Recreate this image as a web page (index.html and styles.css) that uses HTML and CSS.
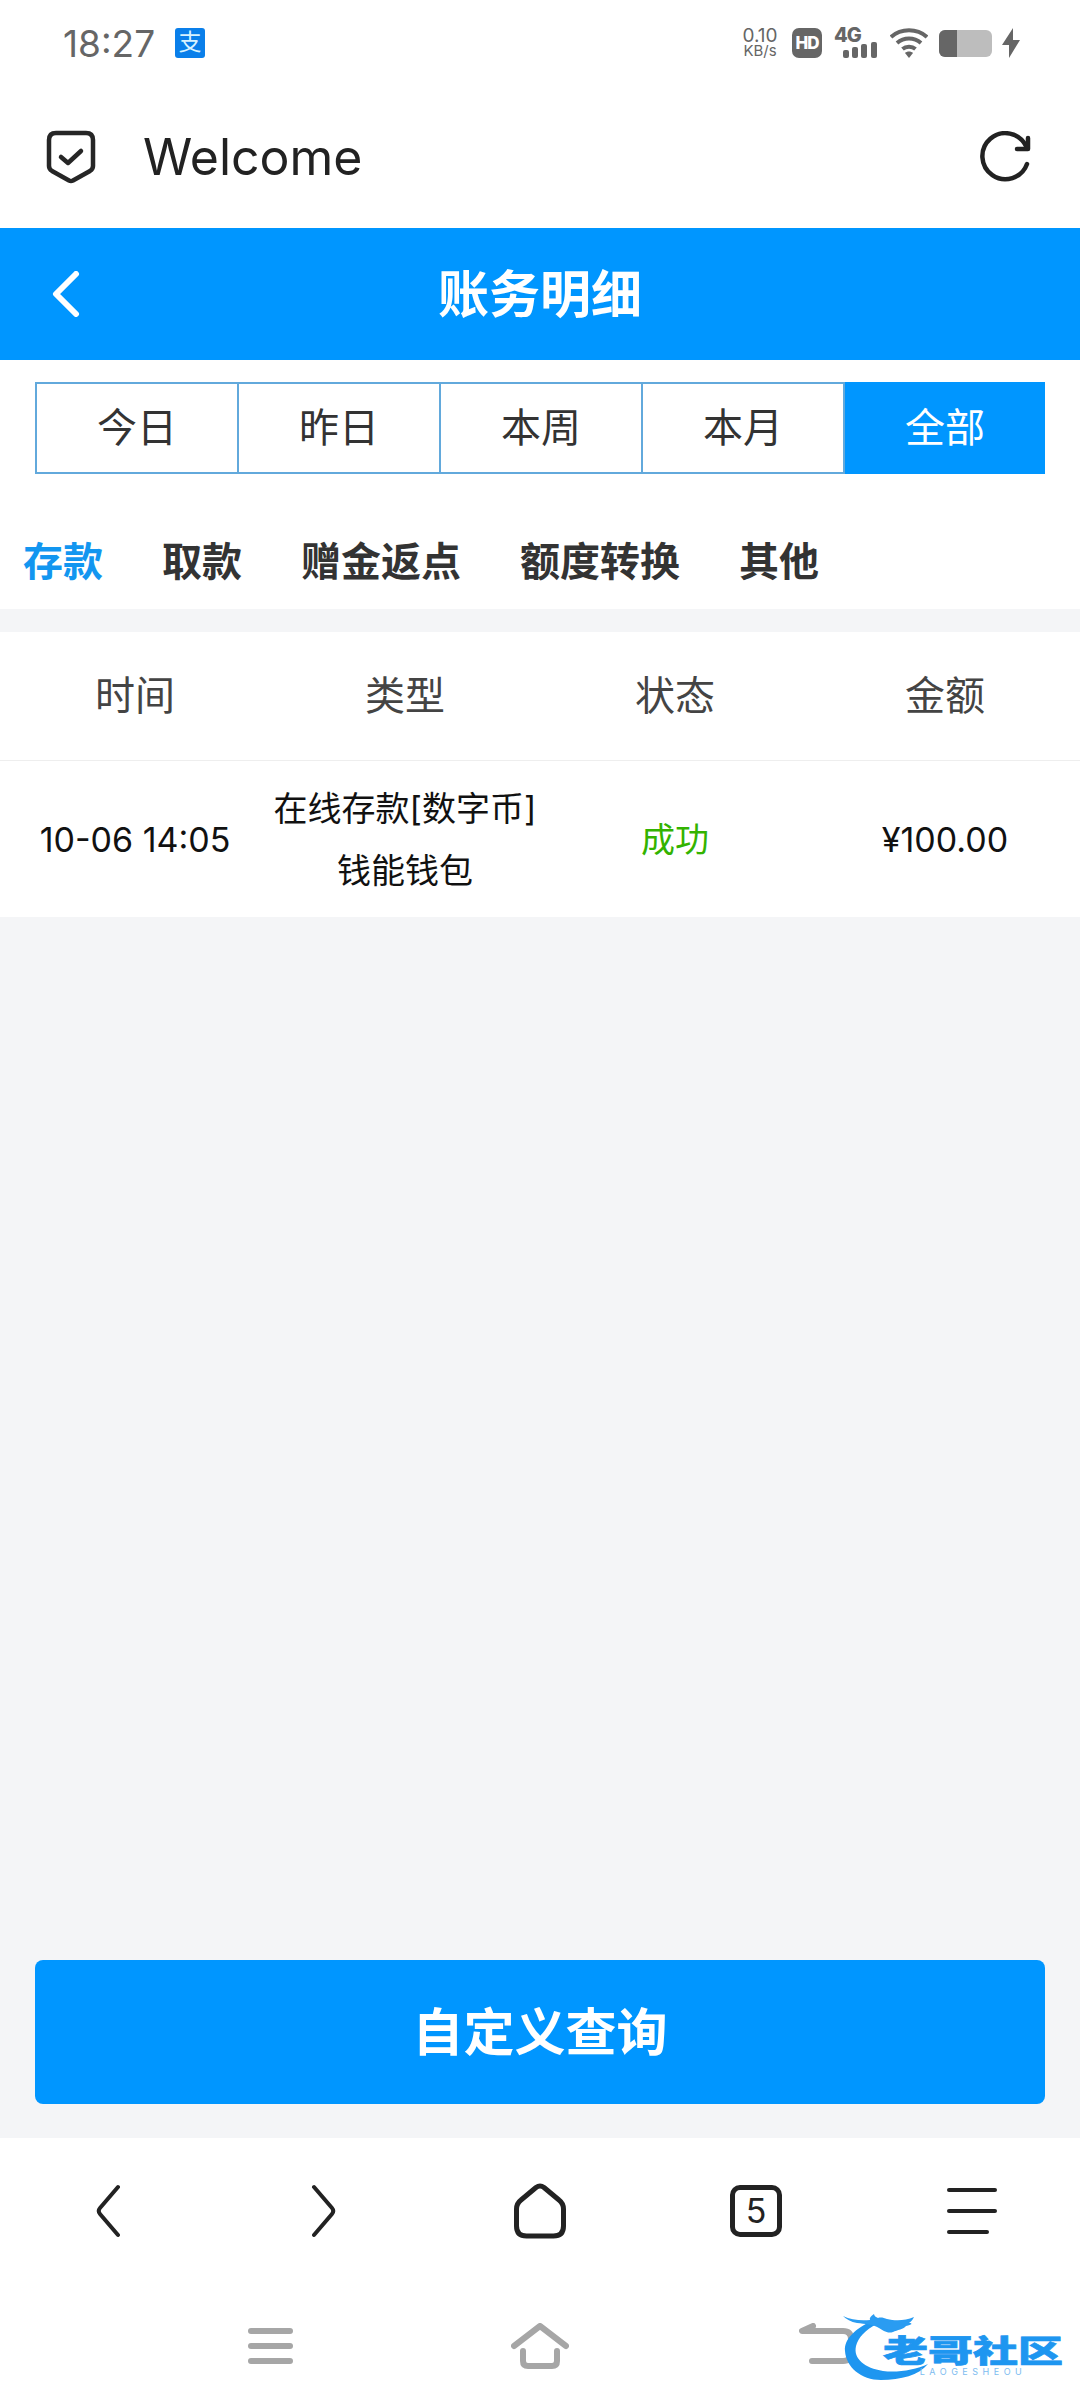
FILE: index.html
```html
<!DOCTYPE html>
<html lang="zh-CN">
<head>
  <meta charset="UTF-8">
  <meta name="viewport" content="width=device-width, initial-scale=1.0">
  <title>账务明细</title>
  <link rel="stylesheet" href="styles.css">
</head>
<body>

  <!-- Phone status bar -->
  <div class="status-bar">
    <div class="status-left">
      <span class="clock">18:27</span>
      <span class="alipay">支</span>
    </div>
    <div class="status-right">
      <div class="speed"><span>0.10</span><span class="speed-unit">KB/s</span></div>
      <span class="hd">HD</span>
      <div class="signal">
        <span class="signal-text">4G</span>
        <svg class="signal-bars" width="35" height="16" viewBox="0 0 35 16">
          <rect x="0" y="8" width="6" height="8" rx="2"/>
          <rect x="9" y="5" width="6" height="11" rx="2"/>
          <rect x="18" y="2" width="6" height="14" rx="2"/>
          <rect x="28" y="0" width="6" height="16" rx="2"/>
        </svg>
      </div>
      <svg class="wifi" width="38" height="30" viewBox="0 0 38 30" fill="none" stroke="#666" stroke-width="4">
        <path d="M1 9 C11 0 27 0 37 9"/>
        <path d="M7 15 C14 9 24 9 31 15"/>
        <path d="M12.5 21 C16 18 22 18 25.5 21"/>
        <path d="M15 25 L19 30 L23 25 C21 23 17 23 15 25Z" fill="#666" stroke="none"/>
      </svg>
      <div class="battery"><div class="battery-fill"></div></div>
      <svg class="bolt" width="18" height="30" viewBox="0 0 18 30">
        <path d="M11 0 L0 17 L7 17 L7 30 L18 12 L11 12Z" fill="#666"/>
      </svg>
    </div>
  </div>

  <!-- Browser title bar -->
  <div class="title-bar">
    <svg class="shield" width="50" height="54" viewBox="0 0 50 54" fill="none" stroke="#262626" stroke-width="4.5" stroke-linecap="round" stroke-linejoin="round">
      <path d="M10 3 H40 Q47 3 47 10 V36 Q47 39 44 41 L27 50.5 Q25 51.5 23 50.5 L6 41 Q3 39 3 36 V10 Q3 3 10 3Z"/>
      <path d="M15 27 L22 33 L35 21"/>
    </svg>
    <span class="page-title">Welcome</span>
    <svg class="reload" width="52" height="52" viewBox="0 0 52 52" fill="none" stroke="#222" stroke-width="4.5" stroke-linecap="round" stroke-linejoin="round">
      <path d="M47 33 A23 23 0 1 1 46 15"/>
      <path d="M48 7 L48 18 L37 18"/>
    </svg>
  </div>

  <!-- Blue page header -->
  <header class="page-header">
    <svg class="back-arrow" width="30" height="46" viewBox="0 0 30 46" fill="none" stroke="#fff" stroke-width="6" stroke-linecap="round" stroke-linejoin="round">
      <path d="M25 3 L5 23 L25 43"/>
    </svg>
    <h1>账务明细</h1>
  </header>

  <div class="filters">
    <div class="range-tabs">
      <div class="range-tab">今日</div>
      <div class="range-tab">昨日</div>
      <div class="range-tab">本周</div>
      <div class="range-tab">本月</div>
      <div class="range-tab active">全部</div>
    </div>
    <div class="type-tabs">
      <span class="type-tab active">存款</span>
      <span class="type-tab">取款</span>
      <span class="type-tab">赠金返点</span>
      <span class="type-tab">额度转换</span>
      <span class="type-tab">其他</span>
    </div>
  </div>

  <main class="content">
    <div class="table">
      <div class="table-head">
        <div>时间</div>
        <div>类型</div>
        <div>状态</div>
        <div>金额</div>
      </div>
      <div class="table-row">
        <div>10-06 14:05</div>
        <div>在线存款[数字币]<br>钱能钱包</div>
        <div class="success">成功</div>
        <div>¥100.00</div>
      </div>
    </div>
    <button type="button" class="query-btn">自定义查询</button>
  </main>

  <!-- Browser toolbar -->
  <nav class="toolbar">
    <div class="tool">
      <svg width="26" height="54" viewBox="0 0 26 54" fill="none" stroke="#222" stroke-width="4" stroke-linecap="round" stroke-linejoin="round">
        <path d="M23 3 L5 24 Q2.500 27 5 30 L23 51"/>
      </svg>
    </div>
    <div class="tool">
      <svg width="26" height="54" viewBox="0 0 26 54" fill="none" stroke="#222" stroke-width="4" stroke-linecap="round" stroke-linejoin="round">
        <path d="M3 3 L21 24 Q23.500 27 21 30 L3 51"/>
      </svg>
    </div>
    <div class="tool">
      <svg width="52" height="56" viewBox="0 0 52 56" fill="none" stroke="#222" stroke-width="5" stroke-linejoin="round">
        <path d="M22 4.500 Q26 1.500 30 4.500 L45 17 Q49.500 20.500 49.500 26 V43 Q49.500 53 39.500 53 H12.500 Q2.500 53 2.500 43 V26 Q2.500 20.500 7 17Z"/>
      </svg>
    </div>
    <div class="tool">
      <span class="tab-count">5</span>
    </div>
    <div class="tool">
      <div class="menu-lines">
        <span></span>
        <span></span>
        <span class="short"></span>
      </div>
    </div>
  </nav>

  <!-- Phone navigation keys -->
  <div class="system-nav">
    <div class="key">
      <div class="key-lines"><span></span><span></span><span></span></div>
    </div>
    <div class="key">
      <svg width="58" height="46" viewBox="0 0 58 46" fill="none" stroke="#a6a6a6" stroke-width="6" stroke-linecap="round" stroke-linejoin="round">
        <path d="M3 23 L29 3 L55 23"/>
        <path d="M12 28 V38 Q12 43 17 43 H41 Q46 43 46 38 V28"/>
      </svg>
    </div>
    <div class="key key-back">
      <svg width="58" height="46" viewBox="0 0 58 46" fill="none" stroke="#a6a6a6" stroke-width="6" stroke-linecap="round" stroke-linejoin="round">
        <path d="M14 3 L3 8 L44 8 Q52 8 52 16 V30 Q52 38 44 38 H13"/>
      </svg>
    </div>
  </div>

  <!-- Site watermark over the bottom corner -->
  <div class="watermark">
    <svg class="watermark-mark" width="90" height="68" viewBox="0 0 90 68">
      <path d="M30 7 C12 16 1 26 2 38 C3 54 18 67 38 67 C58 67 76 62 85 51 C72 57 54 60 40 58 C22 55 10 46 13 33 C15 25 22 17 34 11Z" fill="#1e96f0"/>
      <path d="M0 3 C8 7 18 8 27 7 C26 5 28 3 31 1 C31 3 33 4 35 5 C38 4 41 5 44 6 C52 8 62 8 71 4 C70 6 69 8 66 10 C70 10 69 12 63 13 C61 16 54 17 50 19 C44 21 40 17 36 15 C30 11 22 11 14 10 C8 9 3 6 0 3Z" fill="#2a9cf2"/>
    </svg>
    <div class="watermark-text">
      <span class="watermark-name">老哥社区</span>
      <span class="watermark-latin">LAOGESHEOU</span>
    </div>
  </div>

</body>
</html>
```

FILE: styles.css
```css
* {
  box-sizing: border-box;
}
body {
  font-family: Inter, "Noto Sans CJK SC", sans-serif;
  margin: 0;
  padding: 0;
  width: 1080px;
  height: 2408px;
  background-color: white;
  display: flex;
  flex-direction: column;
  position: relative;
  overflow: hidden;
}

/* status bar */
.status-bar {
  height: 86px;
  flex-shrink: 0;
  display: flex;
  justify-content: space-between;
  align-items: center;
  padding: 0 60px 0 63px;
}
.status-left {
  display: flex;
  align-items: center;
  gap: 20px;
}
.clock {
  font-size: 37px;
  color: #666;
}
.alipay {
  width: 30px;
  height: 30px;
  border-radius: 3px;
  background-color: #0a7fea;
  color: #d8f3ff;
  font-size: 23px;
  line-height: 28px;
  text-align: center;
}
.status-right {
  display: flex;
  align-items: center;
}
.speed {
  display: flex;
  flex-direction: column;
  align-items: center;
  width: 36px;
  font-size: 19px;
  line-height: 16px;
  color: #666;
}
.speed-unit {
  font-size: 15px;
  line-height: 14px;
}
.hd {
  width: 30px;
  height: 30px;
  margin-left: 14px;
  border-radius: 7px;
  background-color: #666;
  color: white;
  font-size: 17px;
  font-weight: 800;
  line-height: 30px;
  text-align: center;
  letter-spacing: -1px;
}
.signal {
  width: 44px;
  height: 30px;
  margin-left: 12px;
  display: flex;
  flex-direction: column;
  align-items: flex-start;
}
.signal-text {
  height: 14px;
  font-size: 20px;
  font-weight: 800;
  line-height: 14px;
  letter-spacing: -1px;
  color: #666;
}
.signal-bars {
  margin-left: 9px;
  fill: #666;
}
.wifi {
  margin-left: 12px;
}
.battery {
  width: 53px;
  height: 27px;
  margin-left: 11px;
  border-radius: 6px;
  background-color: #bdbdbd;
  overflow: hidden;
}
.battery-fill {
  width: 18px;
  height: 100%;
  background-color: #666;
}
.bolt {
  margin-left: 10px;
}

/* browser title bar */
.title-bar {
  height: 142px;
  flex-shrink: 0;
  display: flex;
  align-items: center;
  padding: 0 48px 0 46px;
}
.shield {
  flex-shrink: 0;
}
.page-title {
  flex: 1;
  margin-left: 47px;
  font-size: 50px;
  color: #222;
}

/* blue header */
.page-header {
  height: 132px;
  flex-shrink: 0;
  background-color: #0096ff;
  display: flex;
  justify-content: center;
  align-items: center;
  position: relative;
}
.page-header h1 {
  margin: 0 0 6px;
  font-size: 51px;
  font-weight: 700;
  color: white;
}
.back-arrow {
  position: absolute;
  left: 51px;
  top: 43px;
}

/* range and type tabs */
.filters {
  flex-shrink: 0;
  padding-top: 22px;
}
.range-tabs {
  display: flex;
  height: 92px;
  margin: 0 35px;
  border: 2px solid #62a9dc;
}
.range-tab {
  flex: 1;
  display: flex;
  justify-content: center;
  align-items: center;
  padding-bottom: 6px;
  font-size: 40px;
  color: #333;
  border-right: 2px solid #62a9dc;
}
.range-tab:last-child {
  border-right: none;
}
.range-tab.active {
  background-color: #0096ff;
  color: white;
  margin: -2px -2px -2px 0;
}
.type-tabs {
  height: 135px;
  padding: 34px 0 0 23px;
  display: flex;
  align-items: center;
  gap: 59px;
}
.type-tab {
  font-size: 40px;
  font-weight: 700;
  color: #333;
}
.type-tab.active {
  color: #1296f0;
}

/* table */
.content {
  flex: 1;
  display: flex;
  flex-direction: column;
  padding-top: 23px;
  background-color: #f4f5f7;
}
.table {
  background-color: white;
}
.table-head,
.table-row {
  display: grid;
  grid-template-columns: repeat(4, 1fr);
  align-items: center;
  text-align: center;
}
.table-head {
  height: 129px;
  padding-bottom: 6px;
  border-bottom: 1px solid #eee;
  font-size: 40px;
  color: #444;
}
.table-row {
  height: 156px;
  padding-top: 2px;
  font-size: 34px;
  line-height: 62px;
  color: #111;
}
.success {
  color: #33b300;
}
.query-btn {
  display: block;
  height: 144px;
  margin: auto 35px 34px;
  padding: 0 0 7px;
  background-color: #0096ff;
  color: white;
  border: none;
  border-radius: 8px;
  font-family: inherit;
  font-size: 51px;
  font-weight: 700;
}

/* browser toolbar */
.toolbar {
  height: 145px;
  flex-shrink: 0;
  display: grid;
  grid-template-columns: repeat(5, 1fr);
  align-items: center;
  justify-items: center;
}
.tool {
  display: flex;
  align-items: center;
  justify-content: center;
}
.tab-count {
  width: 52px;
  height: 52px;
  border: 5px solid #222;
  border-radius: 10px;
  display: flex;
  align-items: center;
  justify-content: center;
  font-size: 34px;
  color: #222;
}
.menu-lines {
  width: 50px;
  display: flex;
  flex-direction: column;
  gap: 17px;
}
.menu-lines span {
  display: block;
  height: 4px;
  border-radius: 2px;
  background-color: #222;
}
.menu-lines .short {
  width: 42px;
}

/* phone keys */
.system-nav {
  height: 125px;
  flex-shrink: 0;
  padding: 0 135px;
  display: grid;
  grid-template-columns: repeat(3, 1fr);
  align-items: center;
  justify-items: center;
}
.key {
  display: flex;
}
.key-back {
  margin-left: 36px;
}
.key-lines {
  width: 45px;
  display: flex;
  flex-direction: column;
  gap: 9px;
}
.key-lines span {
  display: block;
  height: 6px;
  border-radius: 3px;
  background-color: #a6a6a6;
}

/* watermark */
.watermark {
  position: absolute;
  left: 843px;
  top: 2313px;
  width: 222px;
  height: 68px;
}
.watermark-mark {
  position: absolute;
  left: 0;
  top: 0;
}
.watermark-text {
  position: absolute;
  left: 40px;
  top: 22px;
  width: 180px;
  display: flex;
  flex-direction: column;
  align-items: center;
}
.watermark-name {
  height: 31px;
  font-size: 45px;
  line-height: 31px;
  font-weight: 900;
  color: #1e96f0;
  -webkit-text-stroke: 1px #1e96f0;
  white-space: nowrap;
  transform: scaleY(0.68);
}
.watermark-latin {
  height: 10px;
  margin-top: 1px;
  font-size: 9px;
  line-height: 10px;
  letter-spacing: 4.500px;
  color: #7dbcf0;
}
```
